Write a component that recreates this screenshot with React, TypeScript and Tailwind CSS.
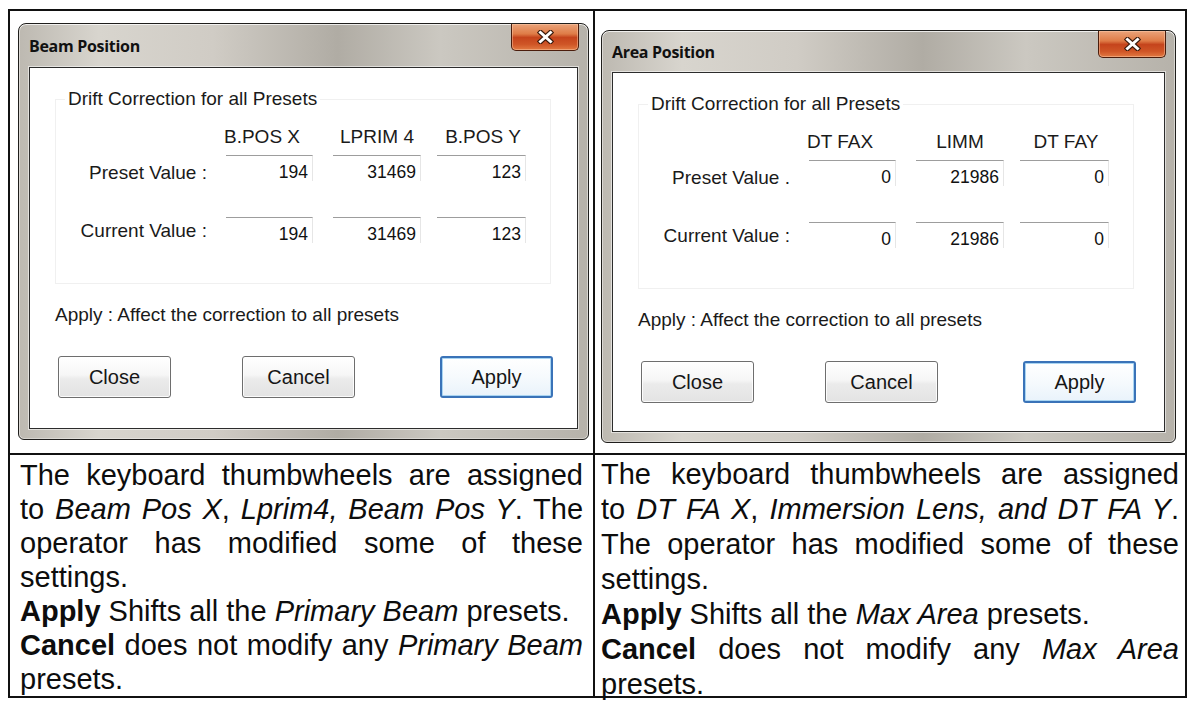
import React from "react";

type DialogProps = {
  title: string;
  frameClass: string;
  titleBarClass: string;
  headers: [string, string, string];
  preset: [string, string, string];
  current: [string, string, string];
  presetLabel: string;
};

function CloseGlyph() {
  return (
    <svg width="17" height="14" viewBox="0 0 17 14" aria-hidden="true">
      <path d="M3.5 2.5 L13.5 11.5 M13.5 2.5 L3.5 11.5" stroke="#3a1a0c" strokeWidth="5.2" strokeLinecap="square" />
      <path d="M3.5 2.5 L13.5 11.5 M13.5 2.5 L3.5 11.5" stroke="#ffffff" strokeWidth="3" strokeLinecap="square" />
    </svg>
  );
}

function Field({ value, cls }: { value: string; cls: string }) {
  return (
    <div
      className={`${cls} h-[26px] shrink-0 border-t border-r border-t-[#9d9d9d] border-r-[#e6e6e6] pt-[6px] pr-[4px] text-right text-[17.5px] leading-[20px] text-[#111]`}
    >
      {value}
    </div>
  );
}

const BTN =
  "flex h-[42px] w-[113px] items-center justify-center rounded-[3px] border border-[#6e6e6e] bg-[linear-gradient(180deg,#ffffff_0%,#f6f6f6_45%,#ebebeb_55%,#e3e3e3_100%)] shadow-[inset_0_0_0_1px_rgba(255,255,255,0.85)]";

function Dialog({ title, frameClass, titleBarClass, headers, preset, current, presetLabel }: DialogProps) {
  return (
    <div
      className={`${frameClass} flex flex-col rounded-t-[8px] rounded-b-[6px] border border-[#1f1e1c] bg-[linear-gradient(90deg,#bdb9b1_0%,#d8d5ce_14%,#d0ccc5_34%,#b0aca4_56%,#cbc8c1_74%,#b6b2aa_100%)] px-[10px] pb-[10px] shadow-[inset_0_1px_0_rgba(255,255,255,0.75),inset_1px_0_0_rgba(255,255,255,0.45),inset_-1px_0_0_rgba(255,255,255,0.45),inset_0_-1px_0_rgba(255,255,255,0.35)]`}
    >
      <div className={`${titleBarClass} flex shrink-0 items-start justify-between`}>
        <span className="self-center font-['Open_Sans',Arial,sans-serif] text-[16px] font-bold tracking-[-0.3px] text-[#111]">
          {title}
        </span>
        <div className="-mr-[1px] flex h-[27px] w-[68px] items-center justify-center rounded-b-[5px] border border-t-0 border-[#4b1d0c] bg-[linear-gradient(180deg,#eaa37a_0%,#df7c47_38%,#c5441c_52%,#cf5526_78%,#e27a42_100%)] shadow-[inset_0_0_0_1px_rgba(255,210,180,0.45)]">
          <CloseGlyph />
        </div>
      </div>
      <div className="flex-1 border border-[#2c2c2c] bg-white shadow-[0_0_0_1px_rgba(255,255,255,0.55)] font-['Liberation_Sans',Arial,sans-serif] text-[#1a1a1a]">
        <fieldset className="m-0 ml-[25px] mt-[20px] w-[496px] border border-[#f0f0f0] p-0 pb-[40px]">
          <legend className="ml-[9px] px-[3px] text-[19px] leading-[22px]">Drift Correction for all Presets</legend>
          <div className="mt-[16px] flex text-[19px] leading-[22px]">
            <div className="w-[151px] shrink-0" />
            <div className="ml-[17px] w-[89px] shrink-0 text-left">{headers[0]}</div>
            <div className="ml-[20px] w-[88px] shrink-0 text-center">{headers[1]}</div>
            <div className="ml-[16px] w-[92px] shrink-0 text-center">{headers[2]}</div>
          </div>
          <div className="mt-[7px] flex">
            <div className="w-[151px] shrink-0 pt-[7px] text-right text-[19px] leading-[22px]">{presetLabel}</div>
            <Field cls="ml-[19px] w-[87px]" value={preset[0]} />
            <Field cls="ml-[20px] w-[88px]" value={preset[1]} />
            <Field cls="ml-[16px] w-[89px]" value={preset[2]} />
          </div>
          <div className="mt-[33px] flex">
            <div className="w-[151px] shrink-0 pt-[3px] text-right text-[19px] leading-[22px]">Current Value :</div>
            <Field cls="ml-[19px] w-[87px]" value={current[0]} />
            <Field cls="ml-[20px] w-[88px]" value={current[1]} />
            <Field cls="ml-[16px] w-[89px]" value={current[2]} />
          </div>
        </fieldset>
        <div className="ml-[25px] mt-[20px] text-[19px] leading-[22px]">Apply : Affect the correction to all presets</div>
        <div className="mt-[30px] flex items-start text-[20px] leading-none text-[#161616]">
          <div className={`ml-[28px] ${BTN}`}>Close</div>
          <div className={`ml-[71px] ${BTN}`}>Cancel</div>
          <div className="ml-[85px] flex h-[42px] w-[113px] items-center justify-center rounded-[3px] border-2 border-[#3a73b8] bg-[linear-gradient(180deg,#ffffff_0%,#f6fafd_50%,#e9f3fb_100%)] shadow-[inset_0_0_0_1px_#a9d5f2]">
            Apply
          </div>
        </div>
      </div>
    </div>
  );
}

const J = "text-justify [text-align-last:justify]";

export default function App() {
  return (
    <div className="h-[710px] w-[1193px] overflow-hidden bg-white pt-[9px] pl-[8px]">
      <div className="grid h-[689px] w-[1179px] grid-cols-[585px_1fr] grid-rows-[444px_241px] border-2 border-[#111]">
        <div className="border-r-2 border-b-2 border-[#111] pl-[8px] pt-[12px]">
          <Dialog
            title="Beam Position"
            frameClass="w-[571px] h-[417px]"
            titleBarClass="h-[43px]"
            headers={["B.POS X", "LPRIM 4", "B.POS Y"]}
            preset={["194", "31469", "123"]}
            current={["194", "31469", "123"]}
            presetLabel="Preset Value :"
          />
        </div>
        <div className="border-b-2 border-[#111] pl-[6px] pt-[19px]">
          <Dialog
            title="Area Position"
            frameClass="w-[575px] h-[413px]"
            titleBarClass="h-[41px]"
            headers={["DT FAX", "LIMM", "DT FAY"]}
            preset={["0", "21986", "0"]}
            current={["0", "21986", "0"]}
            presetLabel="Preset Value ."
          />
        </div>
        <div className="overflow-visible border-r-2 border-[#111] px-[10px] pt-[3px] font-['Liberation_Sans',Arial,sans-serif] text-[29px] leading-[34px] text-[#0d0d0d]">
          <div className={J}>The keyboard thumbwheels are assigned</div>
          <div className={J}>
            to <i>Beam Pos X</i>, <i>Lprim4,</i> <i>Beam Pos Y</i>. The
          </div>
          <div className={J}>operator has modified some of these</div>
          <div>settings.</div>
          <div>
            <b>Apply</b> Shifts all the <i>Primary Beam</i> presets.
          </div>
          <div className={J}>
            <b>Cancel</b> does not modify any <i>Primary Beam</i>
          </div>
          <div>presets.</div>
        </div>
        <div className="overflow-visible px-[6px] pt-[2px] font-['Liberation_Sans',Arial,sans-serif] text-[29px] leading-[35px] text-[#0d0d0d]">
          <div className={J}>The keyboard thumbwheels are assigned</div>
          <div className={J}>
            to <i>DT FA X</i>, <i>Immersion Lens, and DT FA Y</i>.
          </div>
          <div className={J}>The operator has modified some of these</div>
          <div>settings.</div>
          <div>
            <b>Apply</b> Shifts all the <i>Max Area</i> presets.
          </div>
          <div className={J}>
            <b>Cancel</b> does not modify any <i>Max Area</i>
          </div>
          <div>presets.</div>
        </div>
      </div>
    </div>
  );
}
